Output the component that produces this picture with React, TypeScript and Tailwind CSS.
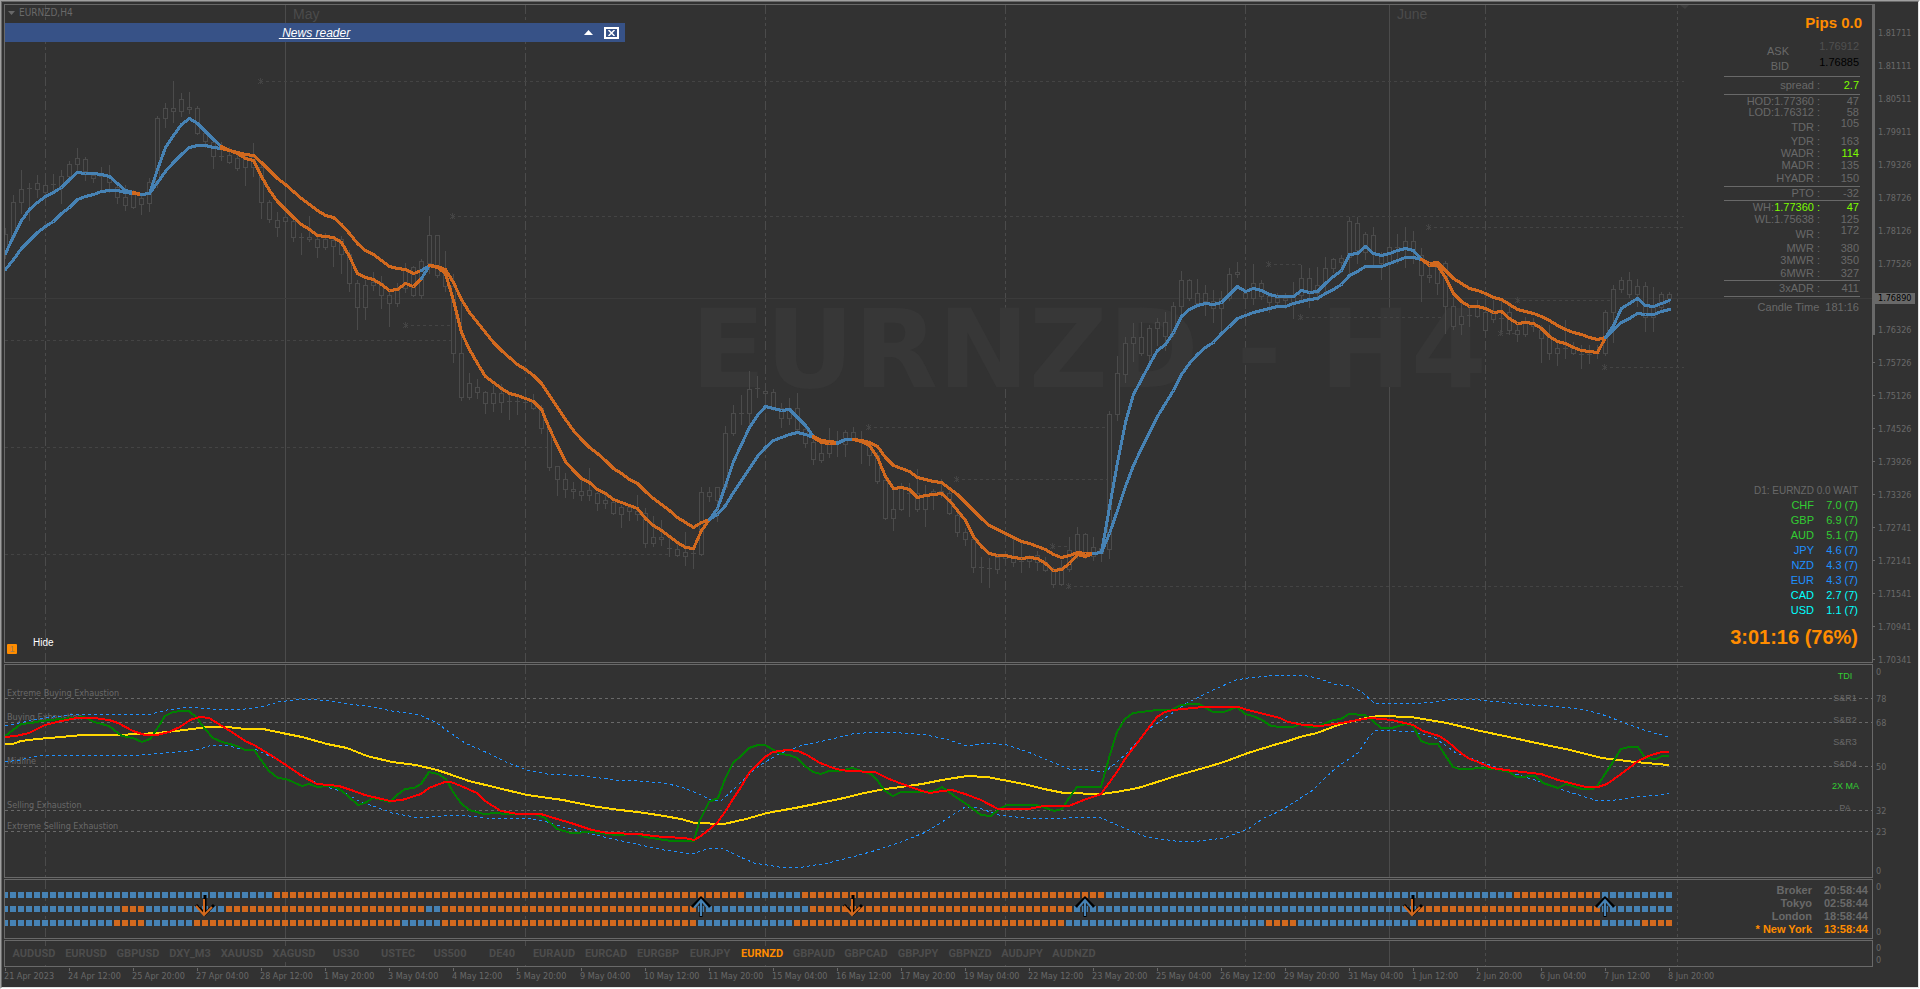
import type { ReactNode } from 'react'

type Tone = 'up' | 'down'

const BAR = 8
const FIRST_X = 5
const UP = '#4682b4'
const DOWN = '#d2691e'
const GRID = '#4b4b4b'
const FRAME = '#696969'

const barX = (i: number) => FIRST_X + i * BAR

// high, body top, body bottom, low (one group per bar)
const CANDLES = `
228,234,250,258 195,202,236,240 170,189,202,213 183,188,189,220 175,183,189,197 180,185,192,196 174,184,185,190 170,176,187,203
161,164,176,182 148,158,164,173 157,159,171,180 172,175,178,182 167,176,177,191 165,176,182,192 182,187,197,203 185,197,205,210
190,193,207,208 195,198,204,214 178,182,203,211 116,118,182,187 103,108,118,127 81,108,111,122 93,99,111,116 92,107,109,113
106,108,133,134 132,133,141,147 140,142,156,168 142,156,156,160 147,155,162,163 152,158,168,170 155,158,167,185 143,157,167,176
163,167,202,218 200,202,219,222 212,220,227,236 213,217,221,235 218,221,237,241 233,237,237,254 216,237,239,241 233,239,247,257
233,239,247,249 238,240,246,266 236,239,254,273 250,254,283,291 280,283,307,329 280,285,307,319 272,282,285,290 276,283,295,308
290,295,303,326 283,290,303,306 263,270,288,292 266,267,295,296 259,261,295,298 216,235,263,273 235,235,275,277 251,270,286,291
274,286,353,362 300,353,397,400 373,383,397,399 379,387,392,398 391,392,403,413 385,393,403,411 384,393,402,412 393,401,401,419
395,401,402,414 393,402,403,407 394,402,408,409 405,408,428,433 426,428,467,470 466,466,479,495 473,479,489,497 482,489,491,498
480,491,495,500 468,490,495,500 492,493,503,510 495,500,503,508 500,502,513,514 505,507,514,527 505,507,511,520 495,511,514,520
508,513,543,547 516,537,543,546 520,537,539,545 537,548,548,556 543,549,555,556 532,552,556,565 548,553,554,568 487,492,554,555
487,492,496,501 487,487,500,521 426,433,487,489 405,413,433,435 395,413,413,424 371,389,413,425 376,388,389,397 383,391,393,407
389,392,407,410 403,408,418,427 398,408,418,424 393,408,429,433 423,429,443,447 435,442,459,464 440,453,460,462 428,443,453,457
431,443,444,456 430,432,444,456 427,432,438,440 431,440,440,463 440,443,455,465 452,455,481,483 473,480,518,519 487,509,518,530
483,487,509,510 483,493,493,516 469,493,509,511 485,495,509,526 489,491,493,509 479,491,493,497 487,493,513,514 510,515,532,536
528,532,539,545 537,539,567,572 557,567,568,582 558,568,569,587 555,557,569,573 553,556,558,561 537,558,562,566 540,561,561,572
555,556,561,567 551,555,562,570 557,562,570,571 567,570,584,587 560,567,584,585 537,550,569,571 527,534,553,558 533,534,555,558
537,547,556,560 543,548,553,561 411,414,549,558 356,373,414,420 337,343,374,382 323,337,343,361 322,337,353,355 325,328,355,360
318,322,328,345 312,322,336,350 302,306,333,336 271,280,306,318 279,280,298,300 279,293,303,305 285,293,301,315 290,301,308,322
291,298,308,330 268,274,298,300 262,272,274,277 269,293,298,308 264,283,298,304 280,283,296,299 293,296,302,312 293,298,302,306
293,298,300,308 282,297,302,318 265,278,295,300 268,278,292,307 267,285,293,300 257,268,283,292 258,259,268,272 255,258,262,272
217,221,257,275 217,223,250,263 232,234,252,259 227,235,253,267 252,255,263,279 247,247,263,270 234,247,247,263 227,241,247,267
231,241,250,263 248,255,275,301 265,275,277,282 263,267,283,294 261,263,306,333 297,306,326,329 302,316,324,334 305,315,316,326
300,307,316,317 300,312,330,337 300,313,319,322 300,318,318,331 302,312,330,334 325,330,334,341 317,323,334,336 318,323,326,331
325,330,338,362 325,337,353,359 342,348,353,365 320,348,348,358 342,347,353,354 345,354,355,368 345,354,355,363 345,353,354,358
310,312,353,355 285,289,312,342 277,280,289,292 272,280,294,297 279,286,294,306 282,286,317,331 287,306,317,331 292,294,307,309
292,294,298,303`.trim().split(/\s+/).map((c) => c.split(',').map(Number))

const FAST_MA = [
  253, 236, 220, 209, 202, 196, 192, 187, 179, 172, 173, 173, 174, 176, 183, 190, 192, 194, 193, 169,
  147, 135, 124, 118, 123, 131, 139, 146, 150, 153, 158, 160, 176, 190, 201, 209, 217, 224, 229, 235,
  236, 237, 242, 256, 273, 277, 279, 284, 290, 289, 283, 286, 278, 265, 267, 273, 300, 332, 349, 363,
  376, 382, 388, 393, 395, 398, 401, 409, 428, 445, 461, 470, 478, 482, 489, 493, 499, 502, 505, 508,
  518, 525, 530, 536, 542, 547, 548, 530, 519, 508, 485, 461, 444, 427, 415, 406, 408, 410, 409, 417,
  425, 436, 440, 441, 442, 439, 439, 441, 445, 457, 476, 488, 487, 489, 497, 495, 494, 493, 500, 510,
  520, 536, 546, 553, 555, 555, 557, 558, 557, 558, 563, 570, 569, 563, 554, 556, 553, 552, 507, 462,
  422, 394, 379, 364, 350, 344, 332, 316, 309, 305, 303, 304, 302, 294, 286, 291, 288, 290, 294, 296,
  296, 296, 290, 292, 291, 283, 276, 270, 254, 253, 246, 253, 255, 253, 250, 248, 250, 259, 265, 265,
  277, 293, 301, 306, 306, 308, 312, 311, 318, 323, 322, 323, 328, 336, 341, 343, 347, 350, 351, 352,
  337, 325, 308, 303, 298, 305, 306, 303, 300,
]

const SLOW_MA = [
  269, 259, 248, 240, 232, 226, 221, 213, 207, 199, 196, 194, 191, 190, 190, 192, 193, 194, 193, 182,
  171, 162, 154, 147, 145, 145, 147, 148, 150, 152, 154, 155, 162, 170, 178, 184, 191, 198, 204, 210,
  215, 217, 224, 233, 243, 250, 254, 260, 266, 268, 269, 273, 270, 265, 266, 269, 282, 299, 312, 322,
  332, 342, 350, 357, 364, 369, 375, 383, 395, 407, 419, 430, 439, 447, 453, 460, 468, 473, 479, 483,
  491, 498, 504, 510, 517, 522, 527, 522, 519, 514, 505, 492, 480, 468, 456, 447, 440, 437, 434, 432,
  434, 437, 442, 443, 443, 439, 439, 440, 442, 446, 457, 465, 468, 471, 477, 479, 481, 482, 488, 494,
  502, 510, 518, 525, 529, 533, 537, 541, 543, 546, 549, 554, 557, 555, 552, 553, 553, 552, 533, 510,
  486, 465, 448, 432, 416, 403, 390, 374, 363, 354, 347, 342, 333, 326, 318, 315, 312, 310, 308, 306,
  306, 303, 301, 299, 298, 293, 289, 284, 275, 271, 266, 266, 266, 263, 260, 257, 257, 259, 263, 262,
  270, 278, 283, 288, 290, 293, 297, 299, 304, 309, 311, 313, 316, 320, 325, 329, 332, 334, 337, 339,
  337, 329, 322, 318, 313, 314, 314, 311, 309,
]

// bar at which the trend colour changes
const TREND: [number, number, Tone][] = [
  [0, 16, 'up'], [16, 17, 'down'], [17, 27, 'up'], [27, 52, 'down'], [52, 53, 'up'], [53, 88, 'down'],
  [88, 101, 'up'], [101, 104, 'down'], [104, 106, 'up'], [106, 136, 'down'], [136, 177, 'up'],
  [177, 200, 'down'], [200, 208, 'up'],
]

// x start, x end, y, marker at start
const LEVELS: [number, number, number, boolean][] = [
  [260, 1684, 81, true], [452, 1684, 216, true], [405, 450, 325, true], [5, 453, 340, false],
  [5, 548, 447, false], [5, 669, 554, false], [868, 1106, 427, true], [956, 1108, 479, true],
  [1052, 1068, 546, true], [1068, 1684, 586, true], [1268, 1301, 264, true], [1428, 1684, 227, true],
  [1300, 1442, 317, true], [1517, 1610, 300, true], [1500, 1517, 333, true], [1604, 1684, 367, true],
]

const SEPARATORS: [number, string | undefined][] = [
  [45, '9 3 3 3 3 3'], [285, undefined], [525, '9 3 3 3 3 3'], [765, '9 3 3 3 3 3'], [1005, '9 3 3 3 3 3'],
  [1245, '9 3 3 3 3 3'], [1389, undefined], [1485, '9 3 3 3 3 3'], [1677, '3 3'],
]

// Oscillator samples, three pages of 640px each, on a 2.45 x 3 sub-grid
const TDI_SIGNAL = [
  '12,267 32,267 51,258 91,253 150,245 200,240 290,240 340,237 385,234 430,228 490,219 512,215 555,217 600,222 645,222 690,234 740,246 800,266 850,280 900,302 960,322 1020,330 1070,345 1100,356 1150,377 1220,398 1290,420 1380,435 1450,452 1500,462 1561,471',
  '12,474 60,482 100,492 135,504 205,507 260,492 310,475 380,458 440,443 500,430 550,415 600,403 640,396 690,388 740,374 800,363 850,367 890,375 940,388 990,402 1040,413 1130,417 1165,412 1220,400 1260,385 1320,360 1390,336 1430,320 1490,295 1561,266',
  '12,260 50,245 90,233 150,207 220,187 245,183 320,187 350,192 410,205 480,226 560,246 640,267 710,285 790,308 870,322 953,330',
]
const TDI_FAST = [
  '12,242 32,225 51,206 75,203 100,198 150,192 180,188 205,187 230,200 268,213 300,244 325,250 347,262 367,253 385,222 404,184 425,172 443,167 463,167 483,190 502,222 522,250 545,260 580,274 600,285 622,286 640,316 660,348 680,368 700,373 740,393 757,386 777,397 800,392 820,397 838,408 855,425 877,450 895,445 915,428 935,434 955,440 973,420 992,403 1015,400 1032,387 1052,352 1072,357 1092,372 1110,410 1130,445 1150,465 1187,478 1215,473 1240,478 1310,478 1335,490 1365,522 1400,534 1450,532 1510,540 1561,536',
  '12,545 75,558 133,558 145,500 169,440 190,428 208,372 228,324 250,300 267,280 290,269 306,270 345,297 365,300 385,310 404,333 424,352 444,357 463,348 490,347 520,338 545,348 565,358 581,375 600,408 620,423 640,411 690,410 720,408 740,397 757,410 777,430 796,443 816,463 836,480 860,483 880,462 900,450 970,450 995,460 1015,469 1035,462 1050,430 1071,396 1130,396 1149,310 1169,232 1189,193 1208,175 1267,165 1300,165 1326,150 1350,147 1370,148 1404,170 1430,170 1463,155 1483,178 1502,182 1525,195 1545,212 1568,216',
  '32,216 50,207 70,216 90,216 130,196 150,193 170,176 208,180 228,197 247,218 275,219 306,208 326,214 345,257 365,267 387,267 404,300 424,337 440,342 465,342 485,338 530,342 560,350 581,367 625,362 645,383 680,400 700,388 740,403 767,402 780,390 796,357 816,320 836,283 855,276 877,276 895,308 920,312 935,302 953,302',
]
const TDI_SLOW = [
  '12,247 40,243 71,235 111,211 150,198 189,188 230,190 268,196 290,205 325,227 355,239 385,240 415,232 440,215 465,195 490,186 512,188 545,213 575,237 600,258 622,270 660,297 700,330 740,362 777,386 830,394 860,404 895,421 955,438 985,434 1032,416 1052,400 1090,382 1105,380 1130,393 1169,413 1189,437 1228,468 1270,476 1325,478 1365,492 1400,505 1450,526 1490,534 1568,536',
  '12,540 60,547 110,550 133,555 150,543 189,505 208,472 228,432 248,396 267,354 287,330 306,305 326,290 360,285 387,289 410,300 440,324 480,341 510,347 575,350 610,371 650,390 690,408 710,413 740,408 765,406 796,417 836,435 877,462 950,461 990,453 1050,453 1080,437 1130,417 1149,385 1169,350 1189,311 1228,249 1267,185 1287,172 1306,165 1380,156 1465,157 1490,166 1530,178 1568,190',
  '20,201 60,210 100,213 150,205 190,195 220,188 275,196 326,210 350,228 390,243 410,258 445,298 465,313 485,320 520,340 570,349 640,357 680,376 750,395 780,396 800,387 836,357 855,340 877,318 910,300 935,292 953,291',
]
const BAND_UPPER = [
  '12,214 71,197 111,188 170,181 220,177 370,178 410,166 460,157 520,163 600,161 650,152 680,140 740,133 810,138 850,148 900,154 960,167 1030,180 1070,203 1100,230 1140,264 1200,298 1240,320 1290,346 1340,358 1430,362 1510,375 1568,377',
  '60,383 100,395 140,415 180,437 200,436 240,390 280,345 306,320 340,297 400,270 460,256 520,238 580,232 640,234 700,241 750,251 800,274 850,265 900,271 950,291 1010,320 1050,341 1100,345 1140,350 1189,300 1250,220 1300,178 1340,145 1400,108 1460,76 1490,69 1568,61',
  '65,62 100,72 130,86 170,94 200,110 230,143 320,147 380,142 420,133 490,134 560,144 620,151 690,155 750,166 800,182 850,207 900,228 953,246',
]
const BAND_LOWER = [
  '12,322 50,316 75,305 110,300 240,304 345,300 400,293 460,289 490,281 520,270 560,272 590,282 630,286 680,315 720,345 760,374 800,395 840,412 880,437 920,456 960,474 1030,490 1080,483 1130,479 1190,489 1300,492 1340,500 1380,515 1440,535 1490,548 1568,570',
  '60,584 130,596 170,578 200,579 240,604 280,624 340,637 400,636 460,624 530,604 580,585 640,560 700,530 740,500 797,455 830,460 880,480 940,488 1020,491 1070,487 1130,488 1180,515 1240,545 1310,558 1370,559 1430,548 1490,522 1530,490 1568,468',
  '40,438 80,405 110,370 140,337 190,295 215,250 235,226 330,230 380,250 430,295 500,325 560,350 600,367 640,382 700,408 740,423 780,437 820,436 870,427 930,421 953,415',
]

const toPoints = (pages: string[]) =>
  pages
    .flatMap((page, i) =>
      page.split(' ').map((p) => {
        const [x, y] = p.split(',').map(Number)
        return `${Math.round(i * 640 + x / 2.45)},${Math.round(655 + y / 3)}`
      }),
    )
    .join(' ')

// first bar of every run, alternating colours, blue first
const TREND_ROWS = [
  { y: 892, runs: [0, 34, 93, 100, 138, 189, 200] },
  { y: 906, runs: [0, 15, 18, 28, 53, 55, 87, 101, 134, 177, 200] },
  { y: 920, runs: [0, 14, 18, 24, 50, 55, 87, 99, 133, 158, 162, 177, 200, 205] },
]

const ARROWS: { x: number; tone: Tone }[] = [
  { x: 205, tone: 'down' }, { x: 701, tone: 'up' }, { x: 853, tone: 'down' },
  { x: 1085, tone: 'up' }, { x: 1413, tone: 'down' }, { x: 1605, tone: 'up' },
]

const PRICES = [
  '1.81711', '1.81111', '1.80511', '1.79911', '1.79326', '1.78726', '1.78126', '1.77526', '', '1.76326',
  '1.75726', '1.75126', '1.74526', '1.73926', '1.73326', '1.72741', '1.72141', '1.71541', '1.70941', '1.70341',
]

const DATES = [
  '21 Apr 2023', '24 Apr 12:00', '25 Apr 20:00', '27 Apr 04:00', '28 Apr 12:00', '1 May 20:00', '3 May 04:00',
  '4 May 12:00', '5 May 20:00', '9 May 04:00', '10 May 12:00', '11 May 20:00', '15 May 04:00', '16 May 12:00',
  '17 May 20:00', '19 May 04:00', '22 May 12:00', '23 May 20:00', '25 May 04:00', '26 May 12:00', '29 May 20:00',
  '31 May 04:00', '1 Jun 12:00', '2 Jun 20:00', '6 Jun 04:00', '7 Jun 12:00', '8 Jun 20:00',
]

const SYMBOLS = [
  'AUDUSD', 'EURUSD', 'GBPUSD', 'DXY_M3', 'XAUUSD', 'XAGUSD', 'US30', 'USTEC', 'US500', 'DE40', 'EURAUD',
  'EURCAD', 'EURGBP', 'EURJPY', 'EURNZD', 'GBPAUD', 'GBPCAD', 'GBPJPY', 'GBPNZD', 'AUDJPY', 'AUDNZD',
]

const STRENGTH = [
  { code: 'CHF', value: '7.0 (7)', color: 'text-[#32cd32]' },
  { code: 'GBP', value: '6.9 (7)', color: 'text-[#32cd32]' },
  { code: 'AUD', value: '5.1 (7)', color: 'text-[#32cd32]' },
  { code: 'JPY', value: '4.6 (7)', color: 'text-[#1e90ff]' },
  { code: 'NZD', value: '4.3 (7)', color: 'text-[#1e90ff]' },
  { code: 'EUR', value: '4.3 (7)', color: 'text-[#1e90ff]' },
  { code: 'CAD', value: '2.7 (7)', color: 'text-[#00ffff]' },
  { code: 'USD', value: '1.1 (7)', color: 'text-[#00ffff]' },
]

const RANGE_ROWS: { label: ReactNode; value: string; row: string; hot?: boolean; split?: boolean }[] = [
  { label: 'spread :', value: '2.7', row: 'h-[18px] [&>td]:border-t', hot: true },
  { label: 'HOD:1.77360 :', value: '47', row: 'h-[13px] [&>td]:border-t' },
  { label: 'LOD:1.76312 :', value: '58', row: 'h-[11px]' },
  { label: 'TDR :', value: '105', row: 'h-[15px]', split: true },
  { label: 'YDR :', value: '163', row: 'h-[14px] [&>td]:align-bottom' },
  { label: 'WADR :', value: '114', row: 'h-3', hot: true },
  { label: 'MADR :', value: '135', row: 'h-3' },
  { label: 'HYADR :', value: '150', row: 'h-[15px]' },
  { label: 'PTO :', value: '-32', row: 'h-[14px] [&>td]:border-t' },
  { label: <>WH:<span className="text-[#7cfc00]">1.77360 :</span></>, value: '47', row: 'h-[13px] [&>td]:border-t', hot: true },
  { label: 'WL:1.75638 :', value: '125', row: 'h-3' },
  { label: 'WR :', value: '172', row: 'h-[15px]', split: true },
  { label: 'MWR :', value: '380', row: 'h-[14px] [&>td]:align-bottom' },
  { label: '3MWR :', value: '350', row: 'h-3' },
  { label: '6MWR :', value: '327', row: 'h-[14px]' },
  { label: '3xADR :', value: '411', row: 'h-4 [&>td]:border-t' },
]

const CLOCKS = [
  { city: 'Broker', time: '20:58:44' },
  { city: 'Tokyo', time: '02:58:44' },
  { city: 'London', time: '18:58:44' },
  { city: '* New York', time: '13:58:44', active: true },
]

function Plot({ box, label, children }: { box: string; label: string; children?: ReactNode }) {
  const [, top, , height] = box.split(' ').map(Number)
  return (
    <svg
      viewBox={box}
      preserveAspectRatio="none"
      role="img"
      aria-label={label}
      className="absolute inset-0 h-full w-full"
    >
      {SEPARATORS.map(([x, dash]) => (
        <path key={x} d={`M${x + 0.5} ${top}v${height}`} stroke={GRID} strokeDasharray={dash} shapeRendering="crispEdges" />
      ))}
      {children}
    </svg>
  )
}

function PriceDrawing() {
  return (
    <>
      <path d="M5 298.5H1872" stroke="#3b3b3b" />
      <text x="691" y="387" fontSize="109" fontWeight="700" fill="#373737" fontFamily="'DejaVu Sans', sans-serif">
        EURNZD - H4
      </text>
      <g stroke="#444444" fill="none" shapeRendering="crispEdges">
        {LEVELS.map(([x1, x2, y, mark]) => (
          <g key={`${x1}-${y}`}>
            <path d={`M${x1} ${y + 0.5}H${x2}`} strokeDasharray="3 3" />
            {mark && <path d={`M${x1 - 2} ${y - 2}l5 5m0 -5l-5 5M${x1} ${y - 3}v6`} />}
          </g>
        ))}
      </g>
      <path d="M1680 5h9l-4 4z" fill="#3f3f3f" />
      <g stroke={GRID} fill="#323232" shapeRendering="crispEdges">
        {CANDLES.map(([h, t, b, l], i) => {
          const x = barX(i) + 0.5
          return (
            <g key={i}>
              <path d={`M${x} ${h}V${l + 1}`} />
              {b - t < 2 ? (
                <path d={`M${x - 2.5} ${t + 0.5}h5`} />
              ) : (
                <rect x={x - 2} y={t + 0.5} width="4" height={b - t} />
              )}
            </g>
          )
        })}
      </g>
      {[FAST_MA, SLOW_MA].map((series, n) => (
        <g key={n} fill="none" strokeWidth="3" strokeLinejoin="round" strokeLinecap="round" shapeRendering="crispEdges">
          {TREND.map(([from, to, tone]) => (
            <polyline
              key={from}
              stroke={tone === 'up' ? UP : DOWN}
              points={series.slice(from, to + 1).map((y, i) => `${barX(from + i) + 0.5},${y + 0.5}`).join(' ')}
            />
          ))}
        </g>
      ))}
      <g fill={GRID} fontSize="14" fontFamily="'Liberation Sans', sans-serif">
        <text x="293" y="19">May</text>
        <text x="1397" y="19">June</text>
      </g>
    </>
  )
}

function TdiDrawing() {
  return (
    <>
      {[698, 722, 766, 810, 831].map((y) => (
        <path key={y} d={`M5 ${y + 0.5}H1872`} stroke={FRAME} strokeDasharray="3 3" shapeRendering="crispEdges" />
      ))}
      <g fill={FRAME} fontSize="9" fontFamily="'DejaVu Sans Condensed', 'DejaVu Sans', sans-serif">
        <text x="7" y="696">Extreme Buying Exhaustion</text>
        <text x="7" y="720">Buying Exhaustion</text>
        <text x="7" y="764">Midline</text>
        <text x="7" y="808">Selling Exhaustion</text>
        <text x="7" y="829">Extreme Selling Exhaustion</text>
      </g>
      <g fill="none" strokeLinejoin="round" shapeRendering="crispEdges">
        <polyline points={toPoints(BAND_UPPER)} stroke="#1e90ff" strokeDasharray="3 3" />
        <polyline points={toPoints(BAND_LOWER)} stroke="#1e90ff" strokeDasharray="3 3" />
        <g strokeWidth="2">
          <polyline points={toPoints(TDI_SIGNAL)} stroke="#ffd700" />
          <polyline points={toPoints(TDI_FAST)} stroke="#008000" />
          <polyline points={toPoints(TDI_SLOW)} stroke="#ff0000" />
        </g>
      </g>
    </>
  )
}

function TrendDrawing() {
  return (
    <>
      <g shapeRendering="crispEdges">
        {TREND_ROWS.map(({ y, runs }) =>
          CANDLES.map((_, i) => {
            const run = runs.filter((r) => r <= i).length - 1
            return <rect key={`${y}-${i}`} x={barX(i) - 3} y={y} width="6" height="6" fill={run % 2 === 0 ? UP : DOWN} />
          }),
        )}
      </g>
      {ARROWS.map(({ x, tone }) => (
        <g key={x} fill="none" strokeWidth="2">
          {tone === 'down' ? (
            <>
              <path d={`M${x} 895v19M${x - 9} 905l9 9l9 -9`} stroke="#000" strokeWidth="3" />
              <path d={`M${x - 1} 899v16M${x - 9} 906l8 9l8 -8`} stroke={DOWN} />
            </>
          ) : (
            <>
              <path d={`M${x} 899v18M${x - 9} 907l9 -9l9 9`} stroke="#000" strokeWidth="3" />
              <path d={`M${x} 901v15M${x - 7} 908l7 -8l7 8`} stroke={UP} />
            </>
          )}
        </g>
      ))}
    </>
  )
}

function Scale({ marks }: { marks: { at: number; text: string }[] }) {
  return (
    <div className="relative text-[9px] leading-[10px]">
      {marks.map(({ at, text }) => (
        <span key={at} className="absolute left-[3px] -translate-y-1/2" style={{ top: `${at}px` }}>
          {text}
        </span>
      ))}
    </div>
  )
}

function RangeTable() {
  return (
    <div className="mr-3 w-[136px] font-['Liberation_Sans',Arial,sans-serif] text-[11px] leading-[11px]">
      <table className="w-full border-separate border-spacing-0 text-right">
        <tbody>
          <tr className="h-4">
            <td className="p-0 align-bottom">ASK</td>
            <td className="w-[71px] p-0 pr-px align-top text-[#505050]">1.76912</td>
          </tr>
          <tr className="h-[19px]">
            <td className="p-0 align-middle">BID</td>
            <td className="p-0 pr-px align-top text-black">1.76885</td>
          </tr>
        </tbody>
      </table>
      <table className="w-full border-separate border-spacing-0 text-right">
        <tbody>
          {RANGE_ROWS.map((r) => (
            <tr key={r.value + r.row} className={`${r.row} [&>td]:border-[#696969]`}>
              <td className={`whitespace-nowrap p-0 pr-1 ${r.split ? 'align-bottom' : ''}`}>{r.label}</td>
              <td className={`w-9 p-0 pr-px ${r.split ? 'align-top' : ''} ${r.hot ? 'text-[#7cfc00]' : ''}`}>{r.value}</td>
            </tr>
          ))}
        </tbody>
      </table>
      <p className="flex h-[21px] items-center justify-end gap-[6px] border-t border-[#696969] pr-px">
        <span>Candle Time</span>
        <span>181:16</span>
      </p>
    </div>
  )
}

function NewsBar() {
  return (
    <div className="flex h-[19px] w-[620px] items-center bg-[#375287] font-['Liberation_Sans',Arial,sans-serif] text-white">
      <div className="w-11 shrink-0" />
      <a href="#news" className="flex-1 whitespace-pre text-center text-xs italic leading-4 underline"> News reader</a>
      <div className="flex items-center gap-2 pr-[6px]">
        <button type="button" aria-label="Collapse" className="flex h-3 w-4 items-center justify-center">
          <svg width="9" height="5" viewBox="0 0 9 5" fill="currentColor"><path d="M4.500 0L9 5H0z" /></svg>
        </button>
        <button type="button" aria-label="Close" className="flex h-3 w-[15px] items-center justify-center border-2 border-white">
          <svg width="7" height="6" viewBox="0 0 7 6" stroke="currentColor" strokeWidth="1.500"><path d="M0.500 0L6.500 6M6.500 0L0.500 6" /></svg>
        </button>
      </div>
    </div>
  )
}

export default function App() {
  return (
    <div className="flex h-screen min-h-[720px] flex-col overflow-hidden border border-b-white border-l-[#a0a0a0] border-r-white border-t-[#a0a0a0] bg-[#323232] font-['DejaVu_Sans_Condensed','DejaVu_Sans',sans-serif] text-[#696969]">
      <div className="grid min-h-0 flex-1 grid-cols-[minmax(0,1fr)_45px] grid-rows-[minmax(0,1fr)_214px_60px_27px_19px] gap-y-px border border-b-[#e3e3e3] border-l-[#696969] border-r-[#e3e3e3] border-t-[#696969] pl-[2px] pt-[2px]">
        {/* Price */}
        <section className="relative flex justify-between border border-[#696969]">
          <Plot box="5 5 1867 657" label="EURNZD H4 price chart">
            <PriceDrawing />
          </Plot>
          <div className="relative flex flex-col">
            <h1 className="flex h-[18px] items-start gap-1 pl-[3px] text-[10px] leading-[15px]">
              <svg width="7" height="4" viewBox="0 0 7 4" className="mt-[6px]" fill="currentColor"><path d="M0 0h7L3.500 4z" /></svg>
              EURNZD,H4
            </h1>
            <NewsBar />
            <div className="mt-auto flex items-end gap-4 pl-[2px] font-['Liberation_Sans',Arial,sans-serif]">
              <span className="mb-2 h-[10px] w-[10px] rounded-[1px] bg-[#ff8c00] text-center text-[9px] leading-[10px] text-[#a07a50]">1</span>
              <button type="button" className="mb-[13px] text-[10px] leading-3 text-white">Hide</button>
            </div>
          </div>
          <div className="relative flex flex-col items-end font-['Liberation_Sans',Arial,sans-serif]">
            <p className="flex h-9 items-center pr-[10px] pt-px text-[15px] font-bold text-[#ff8c00]">Pips 0.0</p>
            <RangeTable />
            <table className="mr-[14px] mt-auto border-separate border-spacing-0 text-right text-[11px] leading-[15px]">
              <caption className="whitespace-nowrap text-right text-[10px]">D1: EURNZD 0.0 WAIT</caption>
              <tbody>
                {STRENGTH.map((s) => (
                  <tr key={s.code} className={s.color}>
                    <td className="p-0">{s.code}</td>
                    <td className="w-11 p-0">{s.value}</td>
                  </tr>
                ))}
              </tbody>
            </table>
            <p className="mb-[10px] mr-[14px] mt-1 text-xl font-bold leading-[30px] text-[#ff8c00]">3:01:16 (76%)</p>
          </div>
        </section>
        <div className="relative text-[9px] leading-[10px]">
          <div className="absolute left-0 top-0 h-[331px] w-[2px] bg-[#696969]" />
          <ul className="flex flex-col pt-3">
            {PRICES.map((p, i) => (
              <li key={i} className="flex h-[33px] items-center gap-[3px]">
                <span className="h-px w-[2px] bg-[#696969]" />
                {p}
              </li>
            ))}
          </ul>
          <span className="absolute left-0 top-[289px] w-[42px] bg-[#696969] pl-[5px] leading-[11px] text-black">1.76890</span>
        </div>

        {/* TDI */}
        <section className="relative flex justify-end border border-[#696969]">
          <Plot box="5 665 1867 212" label="Traders dynamic index">
            <TdiDrawing />
          </Plot>
          <ul className="relative mr-[14px] w-[26px] whitespace-nowrap text-center font-['Liberation_Sans',Arial,sans-serif] text-[9px] leading-[22px]">
            {['TDI', 'S&R1', 'S&R2', 'S&R3', 'S&D4', '2X MA', 'PA'].map((t) => (
              <li key={t} className={t === 'TDI' || t === '2X MA' ? 'text-[#32cd32]' : ''}>{t}</li>
            ))}
          </ul>
        </section>
        <Scale
          marks={[
            { at: 8, text: '0' }, { at: 35, text: '78' }, { at: 59, text: '68' }, { at: 103, text: '50' },
            { at: 147, text: '32' }, { at: 168, text: '23' }, { at: 207, text: '0' },
          ]}
        />

        {/* Multi-timeframe trend */}
        <section className="relative flex justify-end border border-[#696969]">
          <Plot box="5 880 1867 58" label="Trend by time frame">
            <TrendDrawing />
          </Plot>
          <table className="relative mr-1 mt-1 h-[52px] border-separate border-spacing-0 text-right font-['Liberation_Sans',Arial,sans-serif] text-[11px] font-bold leading-[13px]">
            <tbody>
              {CLOCKS.map((c) => (
                <tr key={c.city} className={c.active ? 'text-[#ff8c00]' : ''}>
                  <td className="p-0">{c.city}</td>
                  <td className="w-14 p-0">{c.time}</td>
                </tr>
              ))}
            </tbody>
          </table>
        </section>
        <Scale marks={[{ at: 8, text: '0' }, { at: 53, text: '0' }]} />

        {/* Symbols */}
        <section className="relative border border-[#696969]">
          <Plot box="5 941 1867 25" label="Session separators" />
          <nav className="relative flex h-full items-center pl-[3px] font-[Roboto,sans-serif] text-[11px] font-bold leading-4 text-[#4d4d4d]">
            {SYMBOLS.map((s) => (
              <button key={s} type="button" className={`w-[52px] bg-[#323232] ${s === 'EURNZD' ? 'text-[#ff8c00]' : ''}`}>
                {s}
              </button>
            ))}
          </nav>
        </section>
        <Scale marks={[{ at: 8, text: '0' }, { at: 20, text: '0' }]} />

        {/* Time axis */}
        <ol className="col-span-2 flex text-[9px] leading-[11px]">
          {DATES.map((d) => (
            <li key={d} className="w-16 shrink-0 whitespace-nowrap">
              <span className="ml-px block h-[3px] w-px bg-[#696969]" />
              {d}
            </li>
          ))}
        </ol>
      </div>
    </div>
  )
}
